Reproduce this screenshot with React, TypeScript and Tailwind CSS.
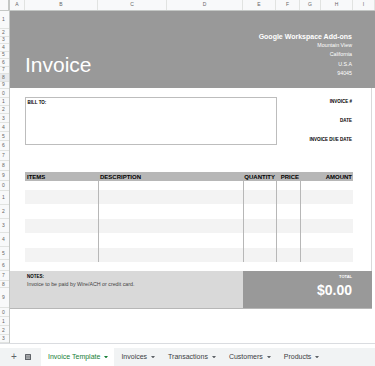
const cols = [
  ["A", "w-[15px]"],
  ["B", "w-[73px]"],
  ["C", "w-[69px]"],
  ["D", "w-[76px]"],
  ["E", "w-[33px]"],
  ["F", "w-[24px]"],
  ["G", "w-[21px]"],
  ["H", "w-[32px]"],
  ["I", "w-[22px]"],
];

// spreadsheet row heights, top to bottom (11px .. 343px)
const rows = [
  "h-[18px]",
  "h-[7.5px]", "h-[7.5px]", "h-[7.5px]", "h-[7.5px]", "h-[7.5px]", "h-[7.5px]", "h-[7.5px]", "h-[7.5px]",
  "h-[9px]", "h-[8px]", "h-[8px]", "h-[9px]", "h-[9px]", "h-[9px]", "h-[10px]", "h-[10px]", "h-[10px]", "h-[10px]",
  "h-[10px]", "h-[14px]", "h-[14px]", "h-[14px]", "h-[14px]", "h-[13px]", "h-[11px]",
  "h-[10px]", "h-[7px]", "h-[20px]", "h-[9px]", "h-[9px]", "h-[9px]", "h-[8px]",
];

const lines = [
  ["h-[9px]", "bg-white"],
  ["h-[14px]", "bg-[#f3f3f3]"],
  ["h-[15px]", "bg-white"],
  ["h-[14px]", "bg-[#f3f3f3]"],
  ["h-[15px]", "bg-white"],
  ["h-[14px]", "bg-[#f3f3f3]"],
];

const tabs = ["Invoices", "Transactions", "Customers", "Products"];

function Caret({ className }: { className: string }) {
  return (
    <svg width="4" height="2.5" viewBox="0 0 4 2.5" className={className}>
      <path d="M0 0h4L2 2.5z" fill="currentColor" />
    </svg>
  );
}

export default function App() {
  return (
    <div className="w-[375px] h-[366px] overflow-hidden bg-white text-black font-['Liberation_Sans',Arial,sans-serif]">
      {/* column letters */}
      <div className="flex h-[11px] border-b border-[#c4c7c5] bg-[#f8f9fa]">
        <div className="w-[10px] shrink-0 border-r-2 border-[#c4c7c5]" />
        {cols.map(([label, w]) => (
          <div key={label} className={`${w} shrink-0 border-r border-[#e1e3e1] flex items-center justify-center text-[5px] text-[#666]`}>
            {label}
          </div>
        ))}
      </div>

      <div className="flex h-[332px]">
        <div className="w-[10px] shrink-0 border-r border-[#c4c7c5] bg-[#f8f9fa] overflow-hidden flex flex-col">
          {rows.map((h, i) => (
            <div key={i} className={`${h} shrink-0 border-b border-[#e1e3e1] flex items-center pl-[2px] text-[5px] leading-none text-[#666] ${i === 7 ? "bg-[#e8eaed]" : ""}`}>
              {(i + 1) % 10}
            </div>
          ))}
        </div>

        <div className="flex-1 flex flex-col">
          {/* banner */}
          <div className="h-[77px] shrink-0 bg-[#999999] flex justify-between text-white">
            <div className="flex items-end pl-[15px] pb-[13px]">
              <span className="text-[21px] leading-none">Invoice</span>
            </div>
            <div className="flex flex-col items-end pr-[23px] pt-[20.5px]">
              <span className="text-[7px] leading-[9px] font-bold">Google Workspace Add-ons</span>
              <span className="text-[5.3px] leading-[9.5px]">Mountain View</span>
              <span className="text-[5.3px] leading-[9.5px]">California</span>
              <span className="text-[5.3px] leading-[9.5px]">U.S.A</span>
              <span className="text-[5.3px] leading-[9.5px]">94045</span>
            </div>
          </div>

          <div className="w-[362px] h-[183px] shrink-0 border-r border-[#d9d9d9] flex flex-col">
            {/* bill to */}
            <div className="h-[84px] shrink-0 flex justify-between">
              <div className="ml-[15px] mt-[9px] w-[252px] h-[48px] border border-[#bdbdbd] pl-[1.5px] pt-[1.5px]">
                <div className="text-[4.5px] leading-[5px] font-bold">BILL TO:</div>
              </div>
              <div className="flex flex-col items-end pr-[19px] pt-[4.5px] text-[4.5px] font-bold">
                <div className="h-[19px] flex items-center">INVOICE #</div>
                <div className="h-[19px] flex items-center">DATE</div>
                <div className="h-[19px] flex items-center">INVOICE DUE DATE</div>
              </div>
            </div>

            {/* items table */}
            <div className="ml-[15px] w-[328px]">
              <div className="flex h-[9px] items-center bg-[#b7b7b7] text-[6px] font-bold leading-none">
                <div className="w-[73px] pl-[2px]">ITEMS</div>
                <div className="w-[145px] pl-[2px]">DESCRIPTION</div>
                <div className="w-[33px] text-right pr-[1px]">QUANTITY</div>
                <div className="w-[24px] text-right pr-[1px]">PRICE</div>
                <div className="w-[53px] text-right pr-[1px]">AMOUNT</div>
              </div>
              {lines.map(([h, bg], i) => (
                <div key={i} className={`flex ${h} ${bg}`}>
                  <div className="w-[73px]" />
                  <div className="w-[145px] border-l border-[#b7b7b7]" />
                  <div className="w-[33px] border-l border-[#b7b7b7]" />
                  <div className="w-[24px] border-l border-[#b7b7b7]" />
                  <div className="w-[53px] border-l border-[#b7b7b7]" />
                </div>
              ))}
            </div>
          </div>

          {/* notes + total */}
          <div className="w-[362px] h-[38px] shrink-0 flex border-b border-[#b7b7b7]">
            <div className="w-[233px] bg-[#d9d9d9] pl-[17px] pt-[3px]">
              <div className="text-[4.5px] leading-[5px] font-bold">NOTES:</div>
              <div className="mt-[1.5px] text-[5.3px] leading-[7px] text-[#444]">Invoice to be paid by Wire/ACH or credit card.</div>
            </div>
            <div className="flex-1 bg-[#999999] flex flex-col items-end pr-[20px] pt-[3px] text-white">
              <div className="text-[4px] leading-[5px] font-bold">TOTAL</div>
              <div className="mt-[4px] text-[14px] leading-none font-bold">$0.00</div>
            </div>
          </div>
        </div>
      </div>

      {/* sheet tabs */}
      <div className="h-[23px] border-t border-[#dadce0] flex flex-col">
        <div className="h-[4px] shrink-0" />
        <div className="flex-1 bg-[#f1f3f4] flex items-stretch text-[7px] text-[#3c4043]">
          <div className="ml-[8px] w-[12px] flex items-center justify-center text-[10px] leading-none text-[#5f6368]">+</div>
          <div className="ml-[2px] mr-[7px] w-[12px] flex items-center justify-center">
            <svg width="6" height="6" viewBox="0 0 6 6" className="text-[#5f6368]">
              <rect x="0" y="0" width="6" height="6" rx="0.5" fill="currentColor" />
              <path d="M1 1.7h4M1 3h4M1 4.3h4" stroke="#f1f3f4" strokeWidth="0.6" />
            </svg>
          </div>
          <div className="bg-white pl-[7px] pr-[6px] flex items-center gap-[4px] text-[#188038]">
            <span>Invoice Template</span>
            <Caret className="text-[#188038]" />
          </div>
          {tabs.map((t) => (
            <div key={t} className="pl-[7px] pr-[6px] flex items-center gap-[4px]">
              <span>{t}</span>
              <Caret className="text-[#5f6368]" />
            </div>
          ))}
        </div>
      </div>
    </div>
  );
}
